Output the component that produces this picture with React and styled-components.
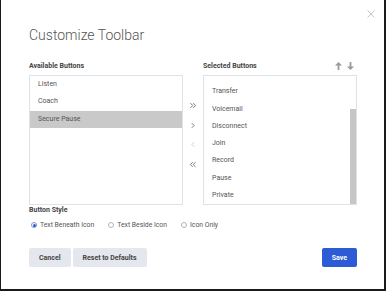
import React from 'react';
import styled, { createGlobalStyle } from 'styled-components';

const GlobalStyle = createGlobalStyle`
  html, body {
    margin: 0;
    padding: 0;
    background: #ffffff;
  }
  * {
    box-sizing: border-box;
  }
`;

const Frame = styled.div`
  position: relative;
  width: 386px;
  height: 291px;
  background: #ffffff;
  border-left: 1px solid #1a1a1a;
  border-right: 2px solid #1a1a1a;
  border-bottom: 2px solid #1a1a1a;
  padding: 25px 27px 0 28px;
  display: flex;
  flex-direction: column;
  font-family: Roboto, 'Liberation Sans', sans-serif;
  color: #555;
`;

const Close = styled.button`
  all: unset;
  position: absolute;
  top: 10px;
  right: 9px;
  width: 8px;
  height: 8px;
  display: flex;
`;

const Title = styled.h2`
  margin: 0 0 16px;
  font-size: 14px;
  line-height: 20px;
  font-weight: 300;
  color: #555;
`;

const Columns = styled.div`
  display: grid;
  grid-template-columns: 154px 20px 154px;
  grid-template-rows: 10px 130px;
  row-gap: 4px;
`;

const Label = styled.div`
  font-size: 7px;
  line-height: 10px;
  font-weight: 700;
  color: #444;
  display: flex;
  align-items: center;
  justify-content: space-between;
  padding-right: 3px;
`;

const Sorters = styled.div`
  display: flex;
  gap: 5px;
`;

const ListFrame = styled.div`
  position: relative;
  height: 130px;
  border: 1px solid #dfe3e8;
`;

const ListBox = styled.ul`
  margin: 0;
  padding: 0;
  list-style: none;
  height: 100%;
  overflow: hidden;
`;

const Thumb = styled.div`
  position: absolute;
  right: 0;
  bottom: 0;
  width: 6px;
  height: 95px;
  background: #c6c6c6;
`;

const Item = styled.li`
  height: 17.3px;
  line-height: 17.3px;
  padding-left: 8px;
  font-size: 7px;
  color: #555;
  background: ${p => (p.active ? '#c9c9c9' : 'transparent')};
`;

const Movers = styled.div`
  display: flex;
  flex-direction: column;
  align-items: center;
  padding-top: 21px;
`;

const Mover = styled.button`
  all: unset;
  height: 19.5px;
  display: flex;
  align-items: center;
  justify-content: center;
  width: 20px;
`;

const RadioRow = styled.div`
  display: flex;
  gap: 14px;
  margin-top: 5px;
  height: 10px;
  padding-left: 2px;
`;

const RadioOption = styled.label`
  display: flex;
  align-items: center;
  gap: 3px;
  font-size: 6.8px;
  color: #555;
`;

const RadioDot = styled.span`
  width: 6px;
  height: 6px;
  border-radius: 50%;
  border: 1px solid ${p => (p.checked ? '#7b96d8' : '#b5b5b5')};
  display: flex;
  align-items: center;
  justify-content: center;
  &::after {
    content: '';
    width: 3px;
    height: 3px;
    border-radius: 50%;
    background: ${p => (p.checked ? '#2b5cd6' : 'transparent')};
  }
`;

const Footer = styled.div`
  display: flex;
  gap: 2px;
  margin-top: 18px;
`;

const Button = styled.button`
  all: unset;
  height: 19px;
  padding: 0 ${p => p.pad || 10}px;
  display: flex;
  align-items: center;
  justify-content: center;
  font-family: Roboto, 'Liberation Sans', sans-serif;
  font-size: 7px;
  font-weight: 700;
  border-radius: 2px;
  background: ${p => (p.primary ? '#2b5cd6' : '#e4e8ee')};
  color: ${p => (p.primary ? '#ffffff' : '#444')};
  margin-left: ${p => (p.push ? 'auto' : '0')};
`;

const Chevron = ({ dir = 'right', double, muted }) => {
  const color = muted ? '#c8c8c8' : '#666';
  const flip = dir === 'left' ? 'scale(-1,1) translate(-8,0)' : undefined;
  return (
    <svg width="8" height="7" viewBox="0 0 8 7">
      <g transform={flip} fill="none" stroke={color} strokeWidth="0.9">
        {double ? (
          <>
            <path d="M1.5 1.2 L3.8 3.5 L1.5 5.8" />
            <path d="M4.3 1.2 L6.6 3.5 L4.3 5.8" />
          </>
        ) : (
          <path d="M2.8 1.2 L5.1 3.5 L2.8 5.8" />
        )}
      </g>
    </svg>
  );
};

const Arrow = ({ down }) => (
  <svg width="7" height="8" viewBox="0 0 7 8">
    <g transform={down ? 'rotate(180 3.5 4)' : undefined} fill="#9a9a9a">
      <path d="M3.5 0 L7 3.6 L4.4 3.6 L4.4 8 L2.6 8 L2.6 3.6 L0 3.6 Z" />
    </g>
  </svg>
);

const available = ['Listen', 'Coach', 'Secure Pause'];
const selected = [
  'Mute',
  'Transfer',
  'Voicemail',
  'Disconnect',
  'Join',
  'Record',
  'Pause',
  'Private'
];

const styles = [
  { label: 'Text Beneath Icon', checked: true },
  { label: 'Text Beside Icon' },
  { label: 'Icon Only' }
];

const App = () => (
  <>
    <GlobalStyle />
    <Frame>
      <Close aria-label="Close">
        <svg width="8" height="8" viewBox="0 0 8 8">
          <path d="M0.5 0.5 L7.5 7.5 M7.5 0.5 L0.5 7.5" stroke="#bdbdbd" strokeWidth="0.9" />
        </svg>
      </Close>
      <Title>Customize Toolbar</Title>
      <Columns>
        <Label>Available Buttons</Label>
        <div />
        <Label>
          Selected Buttons
          <Sorters>
            <Arrow />
            <Arrow down />
          </Sorters>
        </Label>
        <ListFrame>
          <ListBox>
            {available.map(name => (
              <Item key={name} active={name === 'Secure Pause'}>
                {name}
              </Item>
            ))}
          </ListBox>
        </ListFrame>
        <Movers>
          <Mover>
            <Chevron double />
          </Mover>
          <Mover>
            <Chevron />
          </Mover>
          <Mover>
            <Chevron dir="left" muted />
          </Mover>
          <Mover>
            <Chevron dir="left" double />
          </Mover>
        </Movers>
        <ListFrame>
          <ListBox
            ref={el => {
              if (el) el.scrollTop = el.scrollHeight;
            }}>
            {selected.map(name => (
              <Item key={name}>{name}</Item>
            ))}
          </ListBox>
          <Thumb />
        </ListFrame>
      </Columns>
      <Label>Button Style</Label>
      <RadioRow>
        {styles.map(s => (
          <RadioOption key={s.label}>
            <RadioDot checked={s.checked} />
            {s.label}
          </RadioOption>
        ))}
      </RadioRow>
      <Footer>
        <Button pad={10}>Cancel</Button>
        <Button pad={10}>Reset to Defaults</Button>
        <Button primary pad={10} push>
          Save
        </Button>
      </Footer>
    </Frame>
  </>
);

export default App;
